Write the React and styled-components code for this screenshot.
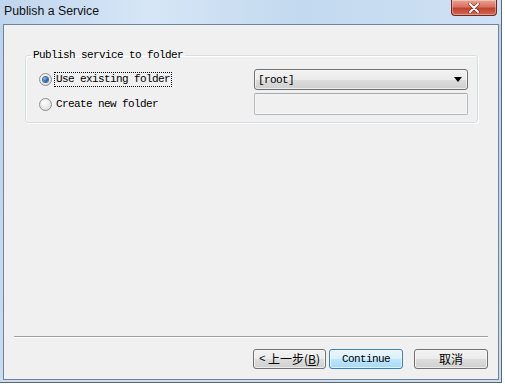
import styled, { createGlobalStyle } from "styled-components";

const Global = createGlobalStyle`
  html, body {
    margin: 0;
    padding: 0;
    background: #ffffff;
  }
  * { box-sizing: border-box; }
`;

const mono = `"Liberation Mono", "Noto Sans CJK SC", monospace`;

const Window = styled.div`
  width: 502px;
  height: 383px;
  display: flex;
  flex-direction: column;
  padding: 0 2px 2px 3px;
  background: linear-gradient(to bottom, #c4d9ef 0px, #bcd3ec 24px, #c9dcf0 100%);
  border-right: 1px solid #5a6673;
  border-bottom: 1px solid #5a6673;
`;

const TitleBar = styled.div`
  height: 24px;
  display: flex;
  align-items: flex-start;
  justify-content: space-between;
  background: linear-gradient(90deg, #c0d6ee 0%, #d6e6f6 30%, #c3d9ef 60%, #cfe1f4 100%);
  margin: 0 -2px 0 -3px;
  padding-left: 4px;
`;

const Title = styled.div`
  font-family: "Liberation Sans", Arial, sans-serif;
  font-size: 12.3px;
  color: #111;
  line-height: 24px;
  margin-top: -1px;
`;

const CloseButton = styled.div`
  width: 46px;
  height: 16px;
  margin-right: 4px;
  border: 1px solid #6e2a22;
  border-top: none;
  border-radius: 0 0 4px 4px;
  background: linear-gradient(to bottom, #e8a493 0%, #d97262 45%, #c2412e 55%, #cf6a55 100%);
  box-shadow: inset 0 0 0 1px rgba(255, 255, 255, 0.35);
  display: flex;
  align-items: center;
  justify-content: center;
`;

const Client = styled.div`
  flex: 1;
  display: flex;
  flex-direction: column;
  background: #f0f0f0;
  border: 1px solid #6f8399;
`;

const Group = styled.fieldset`
  margin: 23px 20px 0 21px;
  padding: 7px 9px 7px 5px;
  border: 1px solid #d5dfe5;
  border-radius: 3px;
  box-shadow: inset 1px 1px 0 #ffffff, 1px 1px 0 #ffffff;
  display: flex;
  flex-direction: column;
  gap: 3px;
`;

const Legend = styled.legend`
  font-family: ${mono};
  font-size: 11px;
  letter-spacing: -0.6px;
  line-height: 14px;
  color: #000;
  padding: 0 2px;
`;

const Row = styled.div`
  height: ${(p) => p.$h}px;
  display: flex;
  align-items: center;
  justify-content: space-between;
`;

const Option = styled.label`
  display: flex;
  align-items: center;
  gap: 2px;
  padding-left: 8px;
`;

const Radio = styled.span`
  width: 13px;
  height: 13px;
  border-radius: 50%;
  border: 1px solid #8e8f8f;
  background: radial-gradient(circle at 40% 35%, #ffffff 0%, #e6e6e6 60%, #cfcfcf 100%);
  display: flex;
  align-items: center;
  justify-content: center;
  &::after {
    content: "";
    width: 5px;
    height: 5px;
    border-radius: 50%;
    display: ${(p) => (p.$checked ? "block" : "none")};
    background: radial-gradient(circle at 35% 35%, #8fc0ea 0%, #2a64a8 55%, #143c6e 100%);
    box-shadow: 0 0 0 1px #3b6ea8;
  }
`;

const OptionText = styled.span`
  font-family: ${mono};
  font-size: 11px;
  letter-spacing: -0.6px;
  line-height: 13px;
  color: #000;
  padding: 0 1px;
  border: 1px dotted ${(p) => (p.$focus ? "#000" : "transparent")};
`;

const Combo = styled.div`
  width: 214px;
  height: 21px;
  border: 1px solid #707070;
  border-radius: 3px;
  background: linear-gradient(to bottom, #f2f2f2 0%, #ebebeb 50%, #dddddd 51%, #cfcfcf 100%);
  box-shadow: inset 0 0 0 1px rgba(255, 255, 255, 0.6);
  display: flex;
  align-items: center;
  justify-content: space-between;
  padding: 0 5px 0 3px;
  font-family: ${mono};
  font-size: 11px;
  letter-spacing: -0.6px;
  color: #000;
`;

const Arrow = styled.span`
  width: 0;
  height: 0;
  border-left: 4px solid transparent;
  border-right: 4px solid transparent;
  border-top: 5px solid #000;
`;

const TextBox = styled.div`
  width: 214px;
  height: 22px;
  border: 1px solid #b5b9c0;
  border-top-color: #a3a7ad;
  border-radius: 2px;
  background: #f0f0f0;
  box-shadow: inset 0 0 0 1px #f6f6f6;
`;

const Spacer = styled.div`
  flex: 1;
`;

const Separator = styled.div`
  margin: 0 10px 0 10px;
  height: 2px;
  border-top: 1px solid #a0a0a0;
  border-bottom: 1px solid #ffffff;
`;

const Buttons = styled.div`
  display: flex;
  justify-content: flex-end;
  gap: 3px;
  margin: 11px 10px 10px 0;
`;

const Button = styled.div`
  width: ${(p) => p.$w}px;
  height: 20px;
  margin-left: ${(p) => p.$ml || 0}px;
  border: 1px solid ${(p) => (p.$primary ? "#3c7fb1" : "#707070")};
  border-radius: 3px;
  background: ${(p) =>
    p.$primary
      ? "linear-gradient(to bottom, #eaf6fd 0%, #d9f0fc 50%, #bee6fd 51%, #a7d9f5 100%)"
      : "linear-gradient(to bottom, #f2f2f2 0%, #ebebeb 50%, #dddddd 51%, #cfcfcf 100%)"};
  box-shadow: inset 0 0 0 1px rgba(255, 255, 255, 0.6);
  display: flex;
  align-items: center;
  justify-content: center;
  font-family: ${(p) => (p.$cjk ? `"Noto Sans CJK SC", sans-serif` : mono)};
  font-size: ${(p) => (p.$cjk ? 12 : 11)}px;
  letter-spacing: ${(p) => (p.$cjk ? 0 : -0.6)}px;
  color: #000;
  line-height: 1;
`;

const Cjk = styled.span`
  font-family: "Noto Sans CJK SC", sans-serif;
  font-size: 12px;
  letter-spacing: 0;
  margin-left: 3px;
`;

export default function App() {
  return (
    <>
      <Global />
      <Window>
        <TitleBar>
          <Title>Publish a Service</Title>
          <CloseButton>
            <svg width="12" height="10" viewBox="0 0 12 10">
              <path d="M2 1 L10 9 M10 1 L2 9" stroke="#7a2a20" strokeWidth="3.2" strokeLinecap="round" />
              <path d="M2 1 L10 9 M10 1 L2 9" stroke="#ffffff" strokeWidth="2" strokeLinecap="round" />
            </svg>
          </CloseButton>
        </TitleBar>
        <Client>
          <Group>
            <Legend>Publish service to folder</Legend>
            <Row $h={21}>
              <Option>
                <Radio $checked />
                <OptionText $focus>Use existing folder</OptionText>
              </Option>
              <Combo>
                <span>[root]</span>
                <Arrow />
              </Combo>
            </Row>
            <Row $h={22}>
              <Option>
                <Radio />
                <OptionText>Create new folder</OptionText>
              </Option>
              <TextBox />
            </Row>
          </Group>
          <Spacer />
          <Separator />
          <Buttons>
            <Button $w={73}>
              &lt;<Cjk>上一步(<u>B</u>)</Cjk>
            </Button>
            <Button $w={74} $primary>Continue</Button>
            <Button $w={74} $ml={8} $cjk>取消</Button>
          </Buttons>
        </Client>
      </Window>
    </>
  );
}
